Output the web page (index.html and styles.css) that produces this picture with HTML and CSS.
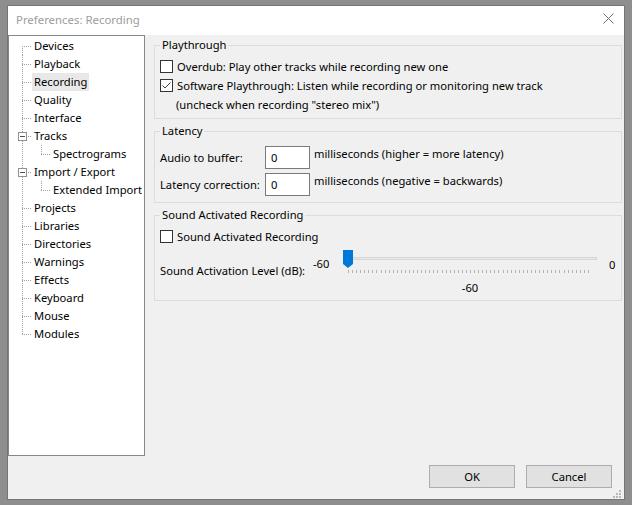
FILE: index.html
```html
<!DOCTYPE html>
<html>
<head>
<meta charset="utf-8">
<title>Preferences: Recording</title>
<link rel="stylesheet" href="styles.css">
</head>
<body>
<div class="window">
  <div class="titlebar">
    <span class="title">Preferences: Recording</span>
    <svg class="close" width="11" height="11" viewBox="0 0 11 11"><path d="M0.5 0.5L10.5 10.5M10.5 0.5L0.5 10.5" stroke="#6f6f6f" stroke-width="1" fill="none"/></svg>
  </div>
  <div class="body">
    <div class="main">
      <ul class="tree">
        <li class="row"><span class="g first"></span><span class="lbl">Devices</span></li>
        <li class="row"><span class="g"></span><span class="lbl">Playback</span></li>
        <li class="row"><span class="g"></span><span class="lbl sel">Recording</span></li>
        <li class="row"><span class="g"></span><span class="lbl">Quality</span></li>
        <li class="row"><span class="g"></span><span class="lbl">Interface</span></li>
        <li class="row"><span class="g"><svg class="exp" width="9" height="9" viewBox="0 0 9 9"><rect x="0.5" y="0.5" width="8" height="8" fill="#fff" stroke="#919191"/><path d="M2 4.5H7" stroke="#505050"/></svg></span><span class="lbl">Tracks</span></li>
        <li class="row"><span class="g c"></span><span class="lbl">Spectrograms</span></li>
        <li class="row"><span class="g"><svg class="exp" width="9" height="9" viewBox="0 0 9 9"><rect x="0.5" y="0.5" width="8" height="8" fill="#fff" stroke="#919191"/><path d="M2 4.5H7" stroke="#505050"/></svg></span><span class="lbl">Import / Export</span></li>
        <li class="row"><span class="g c"></span><span class="lbl">Extended Import</span></li>
        <li class="row"><span class="g"></span><span class="lbl">Projects</span></li>
        <li class="row"><span class="g"></span><span class="lbl">Libraries</span></li>
        <li class="row"><span class="g"></span><span class="lbl">Directories</span></li>
        <li class="row"><span class="g"></span><span class="lbl">Warnings</span></li>
        <li class="row"><span class="g"></span><span class="lbl">Effects</span></li>
        <li class="row"><span class="g"></span><span class="lbl">Keyboard</span></li>
        <li class="row"><span class="g"></span><span class="lbl">Mouse</span></li>
        <li class="row"><span class="g last"></span><span class="lbl">Modules</span></li>
      </ul>
      <div class="panel">
        <fieldset class="group play">
          <legend>Playthrough</legend>
          <label class="chk"><span class="box"></span>Overdub: Play other tracks while recording new one</label>
          <label class="chk"><span class="box"><svg width="11" height="11" viewBox="0 0 11 11"><path d="M1.5 5.5L4 8L9.5 2.5" stroke="#3c3c3c" stroke-width="1" fill="none"/></svg></span>Software Playthrough: Listen while recording or monitoring new track</label>
          <div class="note">(uncheck when recording "stereo mix")</div>
        </fieldset>
        <fieldset class="group latency">
          <legend>Latency</legend>
          <div class="lat">
            <span class="lab">Audio to buffer:</span>
            <input class="num" type="text" value="0">
            <span class="unit">milliseconds (higher = more latency)</span>
            <span class="lab">Latency correction:</span>
            <input class="num" type="text" value="0">
            <span class="unit">milliseconds (negative = backwards)</span>
          </div>
        </fieldset>
        <fieldset class="group sound">
          <legend>Sound Activated Recording</legend>
          <label class="chk"><span class="box"></span>Sound Activated Recording</label>
          <div class="level">
            <span class="lvl-label">Sound Activation Level (dB):</span>
            <span class="lvl-min">-60</span>
            <div class="slider">
              <div class="track"></div>
              <svg class="thumb" width="10" height="18" viewBox="0 0 10 18"><polygon points="0,0 10,0 10,14 5,18 0,14" fill="#0078d7"/></svg>
              <div class="ticks"></div>
              <div class="value">-60</div>
            </div>
            <span class="lvl-max">0</span>
          </div>
        </fieldset>
      </div>
    </div>
    <div class="footer">
      <button class="btn">OK</button>
      <button class="btn">Cancel</button>
      <svg class="grip" width="9" height="8" viewBox="0 0 9 8"><g fill="#b8b8b8"><rect x="6" y="0" width="2" height="2"/><rect x="3" y="3" width="2" height="2"/><rect x="6" y="3" width="2" height="2"/><rect x="0" y="6" width="2" height="2"/><rect x="3" y="6" width="2" height="2"/><rect x="6" y="6" width="2" height="2"/></g></svg>
    </div>
  </div>
</div>
</body>
</html>
```

FILE: styles.css
```css
* { box-sizing: border-box; }

body {
  margin: 0;
  background: #8e8e8e;
  font-family: "Noto Sans", sans-serif;
  font-size: 11.2px;
  color: #000;
}

.window {
  margin: 5px 0 0 7px;
  width: 618px;
  height: 495px;
  border: 1px solid #767676;
  background: #f0f0f0;
  display: flex;
  flex-direction: column;
}

.titlebar {
  height: 29px;
  background: #fff;
  display: flex;
  justify-content: space-between;
  align-items: flex-start;
  padding: 0 10px 0 8px;
  flex: none;
}

.title {
  margin-top: 6px;
  line-height: 16px;
  font-size: 11.4px;
  color: #9c9c9c;
}

.close { margin-top: 7px; display: block; }

.body {
  flex: 1;
  display: flex;
  flex-direction: column;
}

.main {
  display: flex;
  height: 421px;
  flex: none;
}

.tree {
  width: 137px;
  height: 421px;
  flex: none;
  margin: 0;
  padding: 1px 0 0 0;
  list-style: none;
  background: #fff;
  border: 1px solid #828790;
  overflow: hidden;
}

.row {
  display: flex;
  align-items: center;
  height: 18px;
}

.g {
  flex: none;
  width: 23px;
  height: 18px;
  background-image:
    repeating-linear-gradient(to bottom, #a0a0a0 0 1px, transparent 1px 2px),
    repeating-linear-gradient(to right, #a0a0a0 0 1px, transparent 1px 2px);
  background-size: 1px 18px, 10px 1px;
  background-position: 13px 0, 13px 9px;
  background-repeat: no-repeat;
}

.g.first {
  background-size: 1px 9px, 10px 1px;
  background-position: 13px 9px, 13px 9px;
}

.g.last {
  background-size: 1px 10px, 10px 1px;
  background-position: 13px 0, 13px 9px;
}

.g.c {
  width: 42px;
  background-image:
    repeating-linear-gradient(to bottom, #a0a0a0 0 1px, transparent 1px 2px),
    repeating-linear-gradient(to bottom, #a0a0a0 0 1px, transparent 1px 2px),
    repeating-linear-gradient(to right, #a0a0a0 0 1px, transparent 1px 2px);
  background-size: 1px 18px, 1px 10px, 10px 1px;
  background-position: 13px 0, 32px 0, 32px 9px;
}

.exp {
  display: block;
  margin: 5px 0 0 9px;
}

.lbl {
  padding: 0 2px;
  line-height: 18px;
  white-space: nowrap;
}

.lbl.sel { background: #e8e8e8; }

.panel {
  flex: 1;
  padding: 2px 2px 0 9px;
}

.group {
  margin: 0;
  min-width: 0;
  border: 1px solid #dcdcdc;
  padding: 4px 5px 4px 5px;
}

.group + .group { margin-top: 4px; }

.group legend {
  padding: 0 2px;
  line-height: 16px;
}

.chk {
  display: flex;
  align-items: center;
  height: 19px;
  white-space: nowrap;
}

.box {
  flex: none;
  width: 13px;
  height: 13px;
  border: 1px solid #333;
  background: #fff;
  margin-right: 4px;
  display: flex;
  align-items: center;
  justify-content: center;
}

.box svg { display: block; }

.note {
  height: 19px;
  line-height: 19px;
  padding-left: 16px;
}

.group.latency { padding: 7px 5px 6px 5px; }

.lat {
  display: grid;
  grid-template-columns: 105px 45px auto;
  row-gap: 4px;
}

.lab {
  align-self: center;
  line-height: 16px;
  white-space: nowrap;
}

.num {
  width: 45px;
  height: 23px;
  border: 1px solid #7a7a7a;
  background: #fff;
  font: inherit;
  padding: 0 0 0 5px;
  margin: 0;
  color: #000;
}

.unit {
  align-self: start;
  padding-left: 4px;
  line-height: 16px;
  white-space: nowrap;
}

.level {
  display: flex;
  align-items: flex-start;
  margin-top: 4px;
}

.lvl-label {
  width: 153px;
  flex: none;
  margin-top: 13px;
  line-height: 16px;
  white-space: nowrap;
}

.lvl-min {
  width: 30px;
  flex: none;
  margin-top: 6px;
  line-height: 16px;
}

.slider {
  width: 254px;
  flex: none;
  display: grid;
  grid-template-columns: 1fr;
}

.track {
  grid-area: 1 / 1;
  margin-top: 7px;
  height: 3px;
  background: #e7eaea;
  border: 1px solid #d6d6d6;
  align-self: start;
}

.thumb {
  grid-area: 1 / 1;
  display: block;
  align-self: start;
}

.ticks {
  grid-area: 2 / 1;
  margin: 2px 5px 0 5px;
  height: 3px;
  background-image: repeating-linear-gradient(to right, #b4b4b4 0 1px, transparent 1px 4.0667px);
}

.value {
  grid-area: 3 / 1;
  margin-top: 7px;
  line-height: 16px;
  text-align: center;
}

.lvl-max {
  margin-left: 12px;
  margin-top: 7px;
  line-height: 16px;
}

.footer {
  flex: 1;
  display: flex;
  justify-content: flex-end;
  align-items: flex-start;
  padding: 9px 2px 0 0;
  gap: 11px;
}

.btn {
  width: 86px;
  height: 23px;
  background: #e1e1e1;
  border: 1px solid #adadad;
  font: inherit;
  color: #000;
  padding: 0;
  margin: 0;
}

.grip {
  display: block;
  align-self: flex-end;
  margin: 0 0 1px -10px;
}
```
